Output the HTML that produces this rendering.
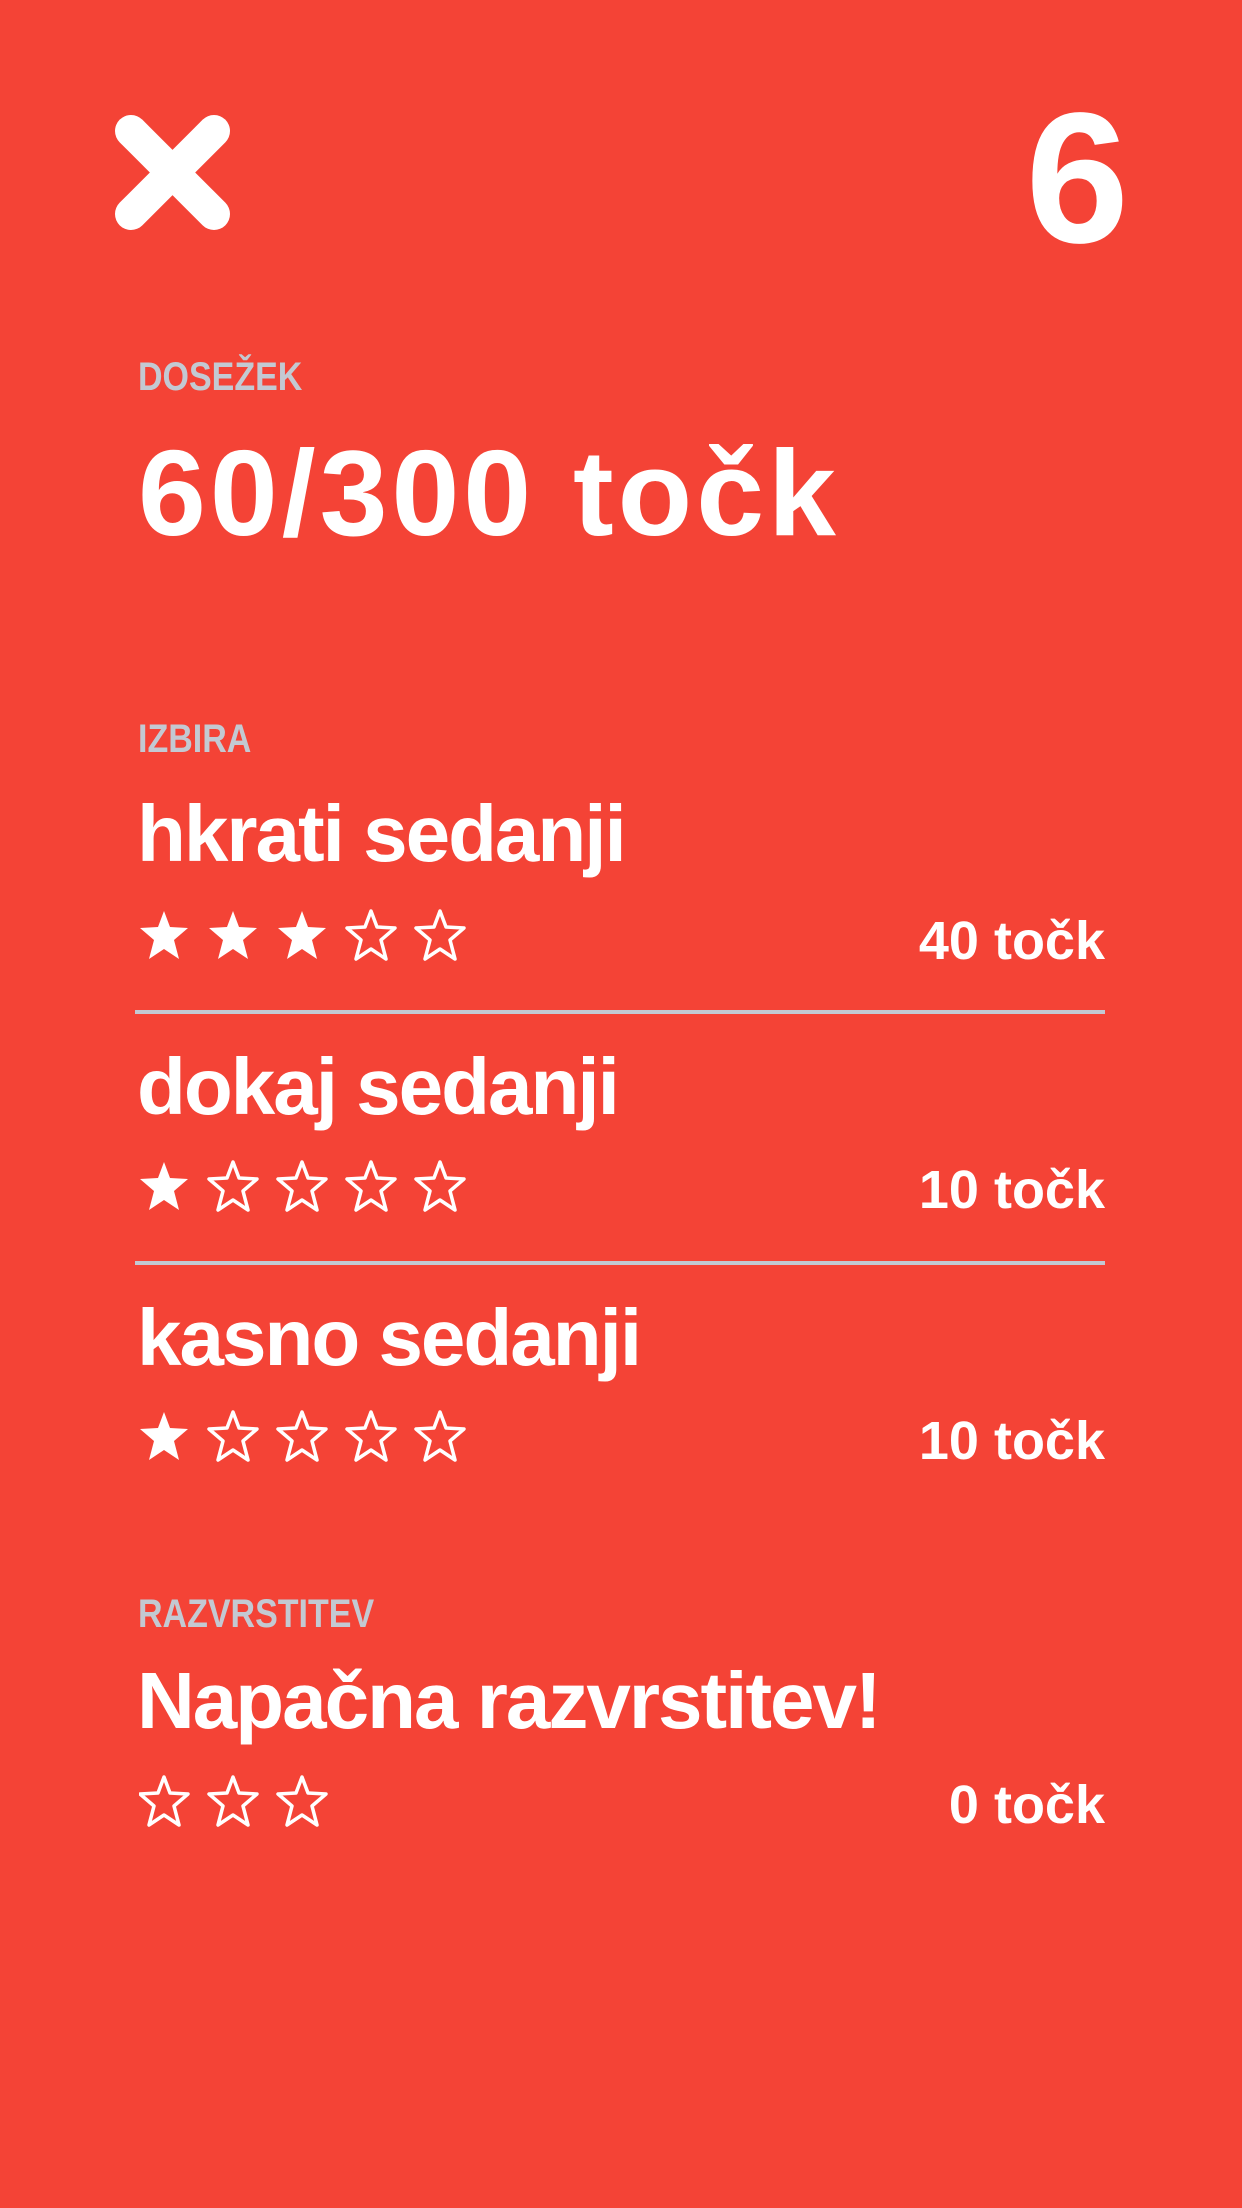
<!DOCTYPE html>
<html><head><meta charset="utf-8"><style>
body{margin:0;width:1242px;height:2208px;background:#f44336;position:relative;overflow:hidden;font-family:"Liberation Sans",sans-serif;font-weight:bold;color:#fff}
.t{position:absolute;white-space:nowrap;line-height:1}
.lab{font-size:40px;color:#c3c9d2;left:138px;transform:scaleX(0.85);transform-origin:left}
.big{font-size:122px;left:138px;letter-spacing:4px}
.ti{font-size:80px;left:137px;letter-spacing:-2px}
.pt{font-size:54px;right:137px;letter-spacing:0px}
.div{position:absolute;left:135px;width:970px;height:4px;background:#c3c9d2}
.stars{position:absolute;left:139px}
</style></head><body>
<svg style="position:absolute;left:0;top:0" width="300" height="300"><g stroke="#fff" stroke-width="32" stroke-linecap="round"><line x1="131" y1="131" x2="214" y2="214"/><line x1="214" y1="131" x2="131" y2="214"/></g></svg>
<div class="t" style="font-size:186px;right:113px;top:86px">6</div>
<div class="t lab" style="top:357px">DOSEŽEK</div>
<div class="t big" style="top:432px">60/300 točk</div>
<div class="t lab" style="top:719px">IZBIRA</div>
<div class="t ti" style="top:794px">hkrati sedanji</div>
<svg class="stars" style="top:909px" width="340" height="56"><defs><path id="s" d="M25 2 L31 18 L49 19 L35 31 L40 50 L25 40 L10 50 L15 31 L1 19 L19 18Z"/></defs>
<use href="#s" fill="#fff"/><use href="#s" x="69" fill="#fff"/><use href="#s" x="138" fill="#fff"/><use href="#s" x="207" fill="none" stroke="#fff" stroke-width="3.5" stroke-linejoin="round"/><use href="#s" x="276" fill="none" stroke="#fff" stroke-width="3.5" stroke-linejoin="round"/></svg>
<div class="t pt" style="top:914px">40 točk</div>
<div class="div" style="top:1010px"></div>
<div class="t ti" style="top:1047px">dokaj sedanji</div>
<svg class="stars" style="top:1160px" width="340" height="56"><use href="#s" fill="#fff"/><use href="#s" x="69" fill="none" stroke="#fff" stroke-width="3.5" stroke-linejoin="round"/><use href="#s" x="138" fill="none" stroke="#fff" stroke-width="3.5" stroke-linejoin="round"/><use href="#s" x="207" fill="none" stroke="#fff" stroke-width="3.5" stroke-linejoin="round"/><use href="#s" x="276" fill="none" stroke="#fff" stroke-width="3.5" stroke-linejoin="round"/></svg>
<div class="t pt" style="top:1163px">10 točk</div>
<div class="div" style="top:1261px"></div>
<div class="t ti" style="top:1298px">kasno sedanji</div>
<svg class="stars" style="top:1410px" width="340" height="56"><use href="#s" fill="#fff"/><use href="#s" x="69" fill="none" stroke="#fff" stroke-width="3.5" stroke-linejoin="round"/><use href="#s" x="138" fill="none" stroke="#fff" stroke-width="3.5" stroke-linejoin="round"/><use href="#s" x="207" fill="none" stroke="#fff" stroke-width="3.5" stroke-linejoin="round"/><use href="#s" x="276" fill="none" stroke="#fff" stroke-width="3.5" stroke-linejoin="round"/></svg>
<div class="t pt" style="top:1414px">10 točk</div>
<div class="t lab" style="top:1594px">RAZVRSTITEV</div>
<div class="t ti" style="top:1661px">Napačna razvrstitev!</div>
<svg class="stars" style="top:1775px" width="340" height="56"><use href="#s" fill="none" stroke="#fff" stroke-width="3.5" stroke-linejoin="round"/><use href="#s" x="69" fill="none" stroke="#fff" stroke-width="3.5" stroke-linejoin="round"/><use href="#s" x="138" fill="none" stroke="#fff" stroke-width="3.5" stroke-linejoin="round"/></svg>
<div class="t pt" style="top:1778px">0 točk</div>
</body></html>
